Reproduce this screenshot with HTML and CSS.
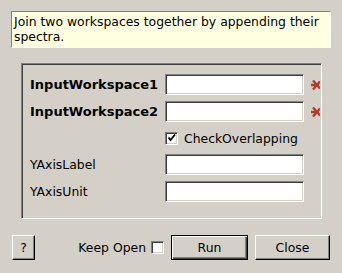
FILE: index.html
```html
<!DOCTYPE html>
<html>
<head>
    <title>AppendSpectra</title>
    <link rel="stylesheet" href="styles.css">
</head>
<body>
    <div class="dialog">
        <div class="description">Join two workspaces together by appending their spectra.</div>

        <div class="group-box">
            <div class="props">
                <label class="prop-label bold">InputWorkspace1</label>
                <input type="text" class="text-field">
                <span class="required"><svg width="10" height="14" viewBox="0 0 10 14"><path d="M1 7 H9 M3 2.5 L7 7 L3 11.5 M7 7 L10 3.5 M7 7 L10 10.5" fill="none" stroke="#b8392a" stroke-width="2.4"/></svg></span>

                <label class="prop-label bold">InputWorkspace2</label>
                <input type="text" class="text-field">
                <span class="required"><svg width="10" height="14" viewBox="0 0 10 14"><path d="M1 7 H9 M3 2.5 L7 7 L3 11.5 M7 7 L10 3.5 M7 7 L10 10.5" fill="none" stroke="#b8392a" stroke-width="2.4"/></svg></span>

                <span></span>
                <label class="check-label">
                    <span class="check-box"><svg width="10" height="10" viewBox="0 0 10 10"><path d="M1.5 4.5 L3.5 7 L8 1.5" fill="none" stroke="#000" stroke-width="1.8"/></svg></span>
                    CheckOverlapping
                </label>
                <span></span>

                <label class="prop-label">YAxisLabel</label>
                <input type="text" class="text-field">
                <span></span>

                <label class="prop-label">YAxisUnit</label>
                <input type="text" class="text-field">
                <span></span>
            </div>
        </div>

        <div class="button-row">
            <button class="btn help-btn">?</button>
            <div class="spacer"></div>
            <label class="keep-open">Keep Open <span class="check-box"></span></label>
            <button class="btn default-btn run-btn">Run</button>
            <button class="btn close-btn">Close</button>
        </div>
    </div>
</body>
</html>
```

FILE: styles.css
```css
body {
    margin: 0;
    background-color: #d4d0c8;
    font-family: "DejaVu Sans", Verdana, sans-serif;
    font-size: 12.4px;
    color: #000;
}

.dialog {
    width: 342px;
    height: 273px;
    overflow: hidden;
}

.description {
    margin: 11px 11px 0 11px;
    padding: 2px 0 0 2px;
    height: 33px;
    line-height: 15px;
    background-color: #ffffe1;
    border-top: 1px solid #808080;
    border-left: 1px solid #808080;
    border-bottom: 1px solid #fff;
    border-right: 1px solid #fff;
}

.group-box {
    margin: 15px 20px 0 21px;
    padding: 10px 0 16px 8px;
    border-top: 1px solid #808080;
    border-left: 1px solid #808080;
    border-bottom: 1px solid #fff;
    border-right: 1px solid #fff;
    box-shadow: inset 1px 1px #404040;
    overflow: hidden;
}

.props {
    display: grid;
    grid-template-columns: 128px 139px 10px;
    grid-template-rows: 21px 21px 20px 21px 21px;
    column-gap: 7px;
    row-gap: 6px;
    align-items: center;
}

.prop-label {
    white-space: nowrap;
}

.bold {
    font-weight: bold;
    font-size: 13px;
}

.text-field {
    box-sizing: border-box;
    width: 139px;
    height: 21px;
    margin: 0;
    padding: 1px 3px;
    background-color: #fff;
    border-top: 1px solid #808080;
    border-left: 1px solid #808080;
    border-bottom: 1px solid #fff;
    border-right: 1px solid #fff;
    box-shadow: inset 1px 1px #404040, inset -1px -1px #d4d0c8;
    font: inherit;
    outline: none;
}

.required {
    display: flex;
    align-items: center;
    height: 21px;
    margin-left: -1px;
}

.check-label {
    display: flex;
    align-items: center;
    gap: 6px;
    white-space: nowrap;
}

.check-box {
    box-sizing: border-box;
    display: inline-flex;
    align-items: center;
    justify-content: center;
    width: 13px;
    height: 13px;
    background-color: #fff;
    border-top: 1px solid #808080;
    border-left: 1px solid #808080;
    border-bottom: 1px solid #fff;
    border-right: 1px solid #fff;
    box-shadow: inset 1px 1px #404040, inset -1px -1px #d4d0c8;
}

.button-row {
    display: flex;
    align-items: center;
    margin-top: 16px;
    padding: 0 12px;
    height: 25px;
}

.spacer {
    flex: 1;
}

.keep-open {
    display: flex;
    align-items: center;
    gap: 5px;
    margin-right: 7px;
}

.btn {
    box-sizing: border-box;
    height: 25px;
    margin: 0;
    padding: 0;
    background-color: #d4d0c8;
    font: inherit;
    color: #000;
    border-top: 1px solid #fff;
    border-left: 1px solid #fff;
    border-bottom: 1px solid #000;
    border-right: 1px solid #000;
    box-shadow: inset -1px -1px #808080;
}

.help-btn {
    width: 23px;
}

.default-btn {
    border: 1px solid #000;
    box-shadow: inset 1px 1px #fff, inset -1px -1px #404040, inset -2px -2px #808080;
}

.run-btn {
    width: 77px;
    margin-right: 7px;
}

.close-btn {
    width: 75px;
}
```
